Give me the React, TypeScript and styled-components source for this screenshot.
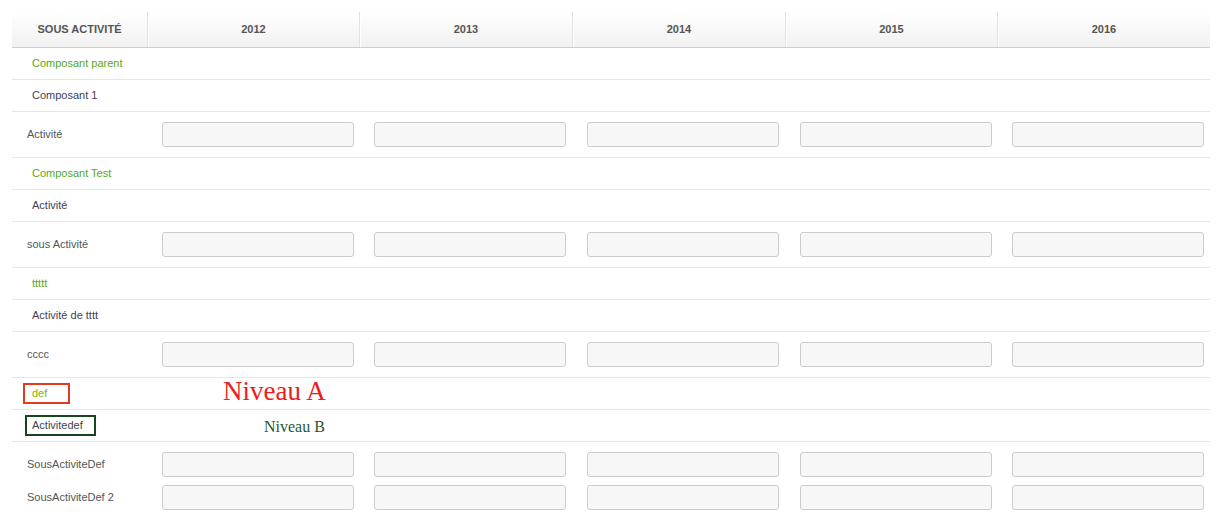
import React from "react";
import styled, { createGlobalStyle } from "styled-components";

const Global = createGlobalStyle`
  html, body { margin: 0; padding: 0; background: #fff; }
  body { font-family: Arial, "Liberation Sans", sans-serif; }
  * { box-sizing: border-box; }
`;

const COLS = "135px 212px 213px 213px 212px 213px";
const YEARS = ["2012", "2013", "2014", "2015", "2016"];

const Page = styled.div`
  padding: 12px 14px 0 12px;
  width: 1224px;
`;

const Table = styled.div`
  width: 1198px;
  display: flex;
  flex-direction: column;
`;

const HeaderRow = styled.div`
  display: grid;
  grid-template-columns: ${COLS};
  height: 36px;
  border-bottom: 1px solid #cfcfcf;
  background: linear-gradient(to bottom, #ffffff 0%, #f1f1f1 100%);
`;

const HeaderCell = styled.div<{ $first?: boolean }>`
  display: flex;
  align-items: center;
  justify-content: center;
  padding-bottom: 2px;
  font-size: 11px;
  font-weight: bold;
  color: #555;
  text-transform: uppercase;
  border-left: ${(p) => (p.$first ? "none" : "1px solid #e2e2e2")};
  box-shadow: ${(p) => (p.$first ? "none" : "inset 1px 0 0 #ffffff")};
`;

const GroupRow = styled.div`
  display: flex;
  align-items: center;
  height: 32px;
  border-bottom: 1px solid #e6e6e6;
`;

const LabelCell = styled.div<{ $tone: "green" | "dark" }>`
  width: 135px;
  flex: none;
  padding-left: 20px;
  padding-bottom: 2px;
  font-size: 11px;
  color: ${(p) => (p.$tone === "green" ? "#58a616" : "#3f3f52")};
`;

const InputRow = styled.div<{ $last?: boolean; $pad: string }>`
  display: grid;
  grid-template-columns: ${COLS};
  align-items: center;
  padding: ${(p) => p.$pad};
  border-bottom: ${(p) => (p.$last ? "none" : "1px solid #e6e6e6")};
`;

const RowLabel = styled.div`
  padding-left: 15px;
  padding-bottom: 2px;
  font-size: 11px;
  color: #555;
`;

const Field = styled.input`
  display: block;
  margin-left: 15px;
  width: 192px;
  height: 25px;
  border: 1px solid #cccccc;
  border-radius: 3px;
  background: #f7f7f7;
  outline: none;
`;

const Marked = styled.span<{ $color: string; $w: number; $pl: number }>`
  display: inline-flex;
  align-items: center;
  width: ${(p) => p.$w}px;
  height: 21px;
  border: 2px solid ${(p) => p.$color};
  padding-left: ${(p) => p.$pl}px;
  padding-bottom: 2px;
`;

const MarkedCell = styled.div<{ $ml: number; $tone: string }>`
  width: 135px;
  flex: none;
  padding-left: ${(p) => p.$ml}px;
  font-size: 11px;
  color: ${(p) => p.$tone};
`;

const Note = styled.div<{ $size: number; $color: string; $ml: number; $dy: number }>`
  font-family: "Liberation Serif", "Times New Roman", serif;
  font-size: ${(p) => p.$size}px;
  color: ${(p) => p.$color};
  margin-left: ${(p) => p.$ml}px;
  line-height: 1;
  transform: translateY(${(p) => p.$dy}px);
`;

type Row =
  | { kind: "group"; label: string; tone: "green" | "dark" }
  | { kind: "input"; label: string };

const rows: Row[] = [
  { kind: "group", label: "Composant parent", tone: "green" },
  { kind: "group", label: "Composant 1", tone: "dark" },
  { kind: "input", label: "Activité" },
  { kind: "group", label: "Composant Test", tone: "green" },
  { kind: "group", label: "Activité", tone: "dark" },
  { kind: "input", label: "sous Activité" },
  { kind: "group", label: "ttttt", tone: "green" },
  { kind: "group", label: "Activité de tttt", tone: "dark" },
  { kind: "input", label: "cccc" },
];

const Inputs: React.FC<{ label: string; pad: string; last?: boolean }> = ({ label, pad, last }) => (
  <InputRow $pad={pad} $last={last}>
    <RowLabel>{label}</RowLabel>
    {YEARS.map((y) => (
      <div key={y}>
        <Field type="text" aria-label={`${label} ${y}`} />
      </div>
    ))}
  </InputRow>
);

export default function App() {
  return (
    <>
      <Global />
      <Page>
        <Table>
          <HeaderRow>
            <HeaderCell $first>Sous activité</HeaderCell>
            {YEARS.map((y) => (
              <HeaderCell key={y}>{y}</HeaderCell>
            ))}
          </HeaderRow>
          {rows.map((r, i) =>
            r.kind === "group" ? (
              <GroupRow key={i}>
                <LabelCell $tone={r.tone}>{r.label}</LabelCell>
              </GroupRow>
            ) : (
              <Inputs key={i} label={r.label} pad="10px 0 10px 0" />
            )
          )}
          <GroupRow>
            <MarkedCell $ml={11} $tone="#7eb400">
              <Marked $color="#e5391c" $w={47} $pl={7}>def</Marked>
            </MarkedCell>
            <Note $size={27} $color="#ee1c1c" $ml={76} $dy={-2}>Niveau A</Note>
          </GroupRow>
          <GroupRow>
            <MarkedCell $ml={13} $tone="#3f3f52">
              <Marked $color="#16451f" $w={71} $pl={5}>Activitedef</Marked>
            </MarkedCell>
            <Note $size={16} $color="#1c5a2a" $ml={117} $dy={1}>Niveau B</Note>
          </GroupRow>
          <Inputs label="SousActiviteDef" pad="10px 0 4px 0" last />
          <Inputs label="SousActiviteDef 2" pad="4px 0 4px 0" last />
        </Table>
      </Page>
    </>
  );
}
